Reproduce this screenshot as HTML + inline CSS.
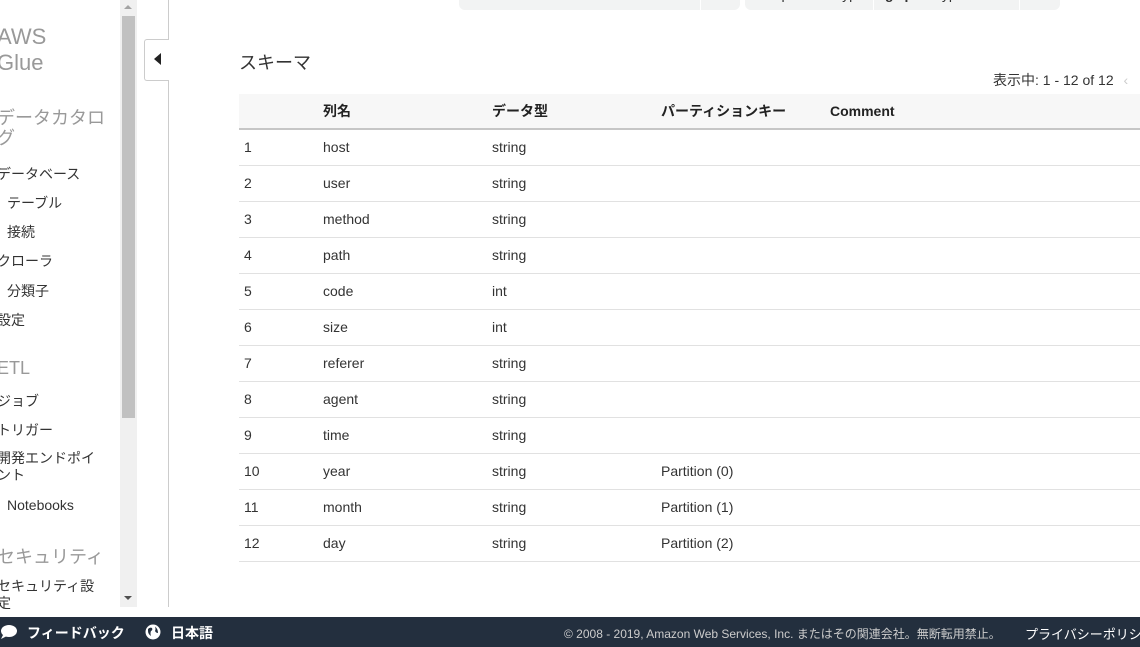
<!DOCTYPE html>
<html><head><meta charset="utf-8"><style>
*{margin:0;padding:0;box-sizing:border-box}
body{width:1140px;height:647px;overflow:hidden;background:#fff;font-family:"Liberation Sans","Noto Sans CJK JP",sans-serif;color:#333;position:relative;font-size:14px}
.a{position:absolute;white-space:nowrap}
.nav{font-size:14px;color:#333}
.sec{font-size:18px;color:#999}
.tag{position:absolute;top:-4px;height:14px;background:#f2f3f3;border-radius:0 0 6px 6px;overflow:hidden}
.tag i{position:absolute;top:0;bottom:0;width:1px;background:#fff}
.tag b{position:absolute;top:-10px;font-size:14px;font-weight:normal;color:#333}
table{position:absolute;left:239px;top:94px;width:901px;border-collapse:collapse;font-size:14px}
th{height:35px;background:#f7f7f7;text-align:left;font-weight:bold;border-bottom:2px solid #c6c6c6;color:#222}
td{height:36px;border-bottom:1px solid #e1e1e1;color:#333}
th,td{padding:0 0 0 5px}
.foot{position:absolute;left:0;top:617px;width:1140px;height:30px;background:#232f3e;color:#fff}
</style></head><body>
<div class="tag" style="left:459px;width:281px"><b style="left:12px">serialization.lib.version</b><i style="left:241px"></i><b style="left:252px">no</b></div>
<div class="tag" style="left:745px;width:275px"><b style="left:10px">compressionType</b><i style="left:128px"></i><b style="left:140px;font-weight:bold">gzip</b></div>
<div class="tag" style="left:928px;width:132px"><b style="left:10px">typeOfData</b><i style="left:91px"></i><b style="left:102px">file</b></div>

<div class="a" style="left:-3px;top:24px;font-size:22px;color:#999;line-height:26px">AWS<br>Glue</div>
<div class="a sec" style="left:-3px;top:108px;line-height:20px">データカタロ<br>グ</div>
<div class="a nav" style="left:-3px;top:164px">データベース</div>
<div class="a nav" style="left:7px;top:193px">テーブル</div>
<div class="a nav" style="left:7px;top:222px">接続</div>
<div class="a nav" style="left:-3px;top:251px">クローラ</div>
<div class="a nav" style="left:7px;top:281px">分類子</div>
<div class="a nav" style="left:-3px;top:310px">設定</div>
<div class="a sec" style="left:-3px;top:358px">ETL</div>
<div class="a nav" style="left:-3px;top:391px">ジョブ</div>
<div class="a nav" style="left:-3px;top:420px">トリガー</div>
<div class="a nav" style="left:-3px;top:450px;line-height:17px">開発エンドポイ<br>ント</div>
<div class="a nav" style="left:7px;top:497px">Notebooks</div>
<div class="a sec" style="left:-3px;top:543px">セキュリティ</div>
<div class="a nav" style="left:-3px;top:578px;line-height:17px">セキュリティ設<br>定</div>

<div class="a" style="left:120px;top:0;width:17px;height:607px;background:#f0f0f0"></div>
<div class="a" style="left:122px;top:16px;width:13px;height:402px;background:#c1c1c1"></div>
<div class="a" style="left:124px;top:5px;width:0;height:0;border:4px solid transparent;border-bottom-color:#a3a3a3;border-top:0"></div>
<div class="a" style="left:124px;top:596px;width:0;height:0;border:4px solid transparent;border-top-color:#505050;border-bottom:0"></div>

<div class="a" style="left:168px;top:0;width:1px;height:607px;background:#ccc"></div>
<div class="a" style="left:144px;top:39px;width:25px;height:42px;background:#fff;border:1px solid #ccc;border-right:none;border-radius:3px 0 0 3px"></div>
<div class="a" style="left:154px;top:53px;width:0;height:0;border:6px solid transparent;border-right:7px solid #222;border-left:0"></div>

<div class="a" style="left:239px;top:49px;font-size:18px;color:#333">スキーマ</div>
<div class="a" style="left:993px;top:70px;font-size:14px;color:#333">表示中: 1 - 12 of 12 <span style="color:#ccc;margin-left:6px">&lsaquo;</span></div>

<table>
<tr><th style="width:79px"></th><th style="width:169px">列名</th><th style="width:169px">データ型</th><th style="width:169px">パーティションキー</th><th>Comment</th></tr>
<tr><td>1</td><td>host</td><td>string</td><td></td><td></td></tr>
<tr><td>2</td><td>user</td><td>string</td><td></td><td></td></tr>
<tr><td>3</td><td>method</td><td>string</td><td></td><td></td></tr>
<tr><td>4</td><td>path</td><td>string</td><td></td><td></td></tr>
<tr><td>5</td><td>code</td><td>int</td><td></td><td></td></tr>
<tr><td>6</td><td>size</td><td>int</td><td></td><td></td></tr>
<tr><td>7</td><td>referer</td><td>string</td><td></td><td></td></tr>
<tr><td>8</td><td>agent</td><td>string</td><td></td><td></td></tr>
<tr><td>9</td><td>time</td><td>string</td><td></td><td></td></tr>
<tr><td>10</td><td>year</td><td>string</td><td>Partition (0)</td><td></td></tr>
<tr><td>11</td><td>month</td><td>string</td><td>Partition (1)</td><td></td></tr>
<tr><td>12</td><td>day</td><td>string</td><td>Partition (2)</td><td></td></tr>
</table>

<div class="foot">
<svg class="a" style="left:0;top:7px" width="18" height="16" viewBox="0 0 18 16"><ellipse cx="9" cy="7" rx="8" ry="6" fill="#fff"/><path d="M3 11 L1 15 L7 12Z" fill="#fff"/></svg>
<div class="a" style="left:27px;top:6px;font-size:14px;font-weight:bold">フィードバック</div>
<svg class="a" style="left:145px;top:7px" width="16" height="16" viewBox="0 0 16 16"><circle cx="8" cy="8" r="7.5" fill="#fff"/><path d="M3 5 Q5 3 7 4 Q8 6 6 7 Q5 9 6 12 Q3 10 3 7Z M10 2.5 Q13 5 13 9 Q11 9 10 7 Q11 5 10 2.5Z" fill="#232f3e"/></svg>
<div class="a" style="left:171px;top:6px;font-size:14px;font-weight:bold">日本語</div>
<div class="a" style="left:564px;top:8px;font-size:12px;color:#ccc">© 2008 - 2019, Amazon Web Services, Inc. またはその関連会社。無断転用禁止。</div>
<div class="a" style="left:1025px;top:7px;font-size:13px">プライバシーポリシー</div>
</div>
</body></html>
